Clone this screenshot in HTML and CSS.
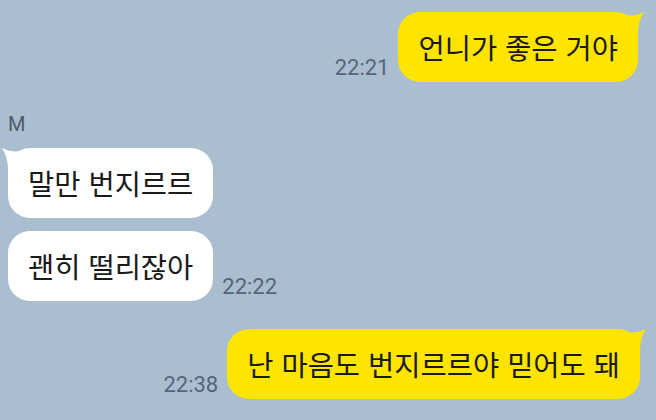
FILE: index.html
```html
<!DOCTYPE html>
<html lang="ko">
<head>
<meta charset="utf-8">
<link rel="stylesheet" href="styles.css">
</head>
<body>
<div class="chat">
  <div class="row me first">
    <span class="time">22:21</span>
    <div class="bubble yellow">언니가 좋은 거야<svg class="tail tail-r" viewBox="0 0 24 22"><path d="M0 0 Q9 7 24 0 Q18 9 18 22 L0 22 Z"/></svg></div>
  </div>
  <div class="name">M</div>
  <div class="row other">
    <div class="bubble white">말만 번지르르<svg class="tail tail-l" viewBox="0 0 24 22"><path d="M24 0 Q15 7 0 0 Q6 9 6 22 L24 22 Z"/></svg></div>
  </div>
  <div class="row other second">
    <div class="bubble white">괜히 떨리잖아</div>
    <span class="time">22:22</span>
  </div>
  <div class="row me last">
    <span class="time">22:38</span>
    <div class="bubble yellow">난 마음도 번지르르야 믿어도 돼<svg class="tail tail-r" viewBox="0 0 24 22"><path d="M0 0 Q9 7 24 0 Q18 9 18 22 L0 22 Z"/></svg></div>
  </div>
</div>
</body>
</html>
```
FILE: styles.css
```css
html, body {
  margin: 0;
  padding: 0;
  background: #aabed0;
  width: 656px;
  height: 420px;
  overflow: hidden;
}
.chat {
  display: flex;
  flex-direction: column;
  padding: 12px 18px 0 8px;
  font-family: "Noto Sans CJK KR", "Noto Sans", sans-serif;
}
.row {
  display: flex;
  align-items: flex-end;
  gap: 9px;
}
.row.me {
  justify-content: flex-end;
}
.row.other.second {
  margin-top: 13px;
}
.row.me.last {
  margin-top: 28px;
  margin-right: -2px;
}
.name {
  margin-top: 30px;
  margin-bottom: 12px;
  font-family: Roboto, "Noto Sans", sans-serif;
  font-size: 20px;
  line-height: 24px;
  color: #4d5b6b;
}
.bubble {
  position: relative;
  font-size: 28.5px;
  line-height: 36px;
  padding: 17px 20px;
  border-radius: 22px;
  color: #1a1a1a;
  white-space: nowrap;
}
.yellow {
  background: #fee500;
}
.white {
  background: #ffffff;
}
.tail {
  position: absolute;
  top: 0;
  width: 24px;
  height: 22px;
}
.yellow .tail path { fill: #fee500; }
.white .tail path { fill: #ffffff; }
.tail-r {
  right: -6px;
}
.tail-l {
  left: -6px;
}
.time {
  font-family: Roboto, "Noto Sans", sans-serif;
  font-size: 22px;
  line-height: 24px;
  color: #55657a;
  margin-bottom: 2px;
}
```
